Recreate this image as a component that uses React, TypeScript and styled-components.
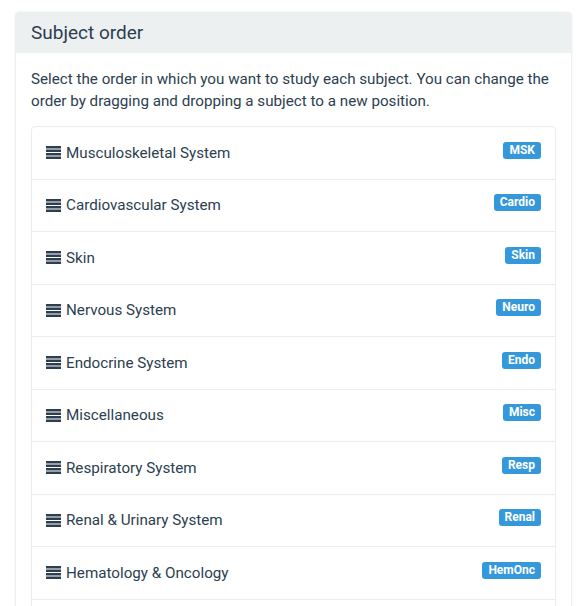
import styled, { createGlobalStyle } from 'styled-components';

const GlobalStyle = createGlobalStyle`
  body {
    margin: 0;
    background: #ffffff;
    font-family: Roboto, "Liberation Sans", sans-serif;
    color: #2c3e50;
  }
`;

const Card = styled.div`
  margin: 12px 14px 0 16px;
  background: #ffffff;
  border-radius: 3px;
  box-shadow: 0 1px 3px rgba(0, 0, 0, 0.18);
  overflow: hidden;
`;

const CardHeader = styled.div`
  background: #ecf0f1;
  height: 41px;
  padding: 0 15px;
  display: flex;
  align-items: center;
  font-size: 19px;
  color: #2c3e50;
`;

const CardBody = styled.div`
  padding: 15px;
`;

const Intro = styled.p`
  margin: 0 0 14px;
  font-size: 15.2px;
  line-height: 22px;
  color: #2c3e50;
`;

const List = styled.ul`
  list-style: none;
  margin: 0;
  padding: 0;
  border: 1px solid #ececec;
  border-radius: 4px;
`;

const Item = styled.li`
  display: flex;
  align-items: center;
  padding: 14.5px 14px;
  border-top: 1px solid #ececec;
  font-size: 15.2px;
  line-height: 22.5px;

  &:first-child {
    border-top: none;
  }
`;

const Label = styled.span`
  flex: 1;
  display: flex;
  align-items: center;
  gap: 5px;
`;

const Badge = styled.span`
  background: #3498db;
  color: #ffffff;
  font-size: 12px;
  font-weight: 700;
  line-height: 17px;
  padding: 0 6px;
  border-radius: 3px;
  margin-top: -5px;
`;

const Handle = () => (
	<svg width="15" height="13" viewBox="0 0 15 13">
		{[0, 3.5, 7, 10.5].map((y) => (
			<rect key={y} x="0" y={y} width="15" height="2.5" fill="#2c3e50" />
		))}
	</svg>
);

const subjects = [
	{ name: 'Musculoskeletal System', tag: 'MSK' },
	{ name: 'Cardiovascular System', tag: 'Cardio' },
	{ name: 'Skin', tag: 'Skin' },
	{ name: 'Nervous System', tag: 'Neuro' },
	{ name: 'Endocrine System', tag: 'Endo' },
	{ name: 'Miscellaneous', tag: 'Misc' },
	{ name: 'Respiratory System', tag: 'Resp' },
	{ name: 'Renal & Urinary System', tag: 'Renal' },
	{ name: 'Hematology & Oncology', tag: 'HemOnc' },
	{ name: 'Gastrointestinal System', tag: 'GI' },
];

const App = () => (
	<>
		<GlobalStyle />
		<Card>
			<CardHeader>Subject order</CardHeader>
			<CardBody>
				<Intro>
					Select the order in which you want to study each subject. You can change the
					order by dragging and dropping a subject to a new position.
				</Intro>
				<List>
					{subjects.map((s) => (
						<Item key={s.tag}>
							<Label>
								<Handle />
								{s.name}
							</Label>
							<Badge>{s.tag}</Badge>
						</Item>
					))}
				</List>
			</CardBody>
		</Card>
	</>
);

export default App;
